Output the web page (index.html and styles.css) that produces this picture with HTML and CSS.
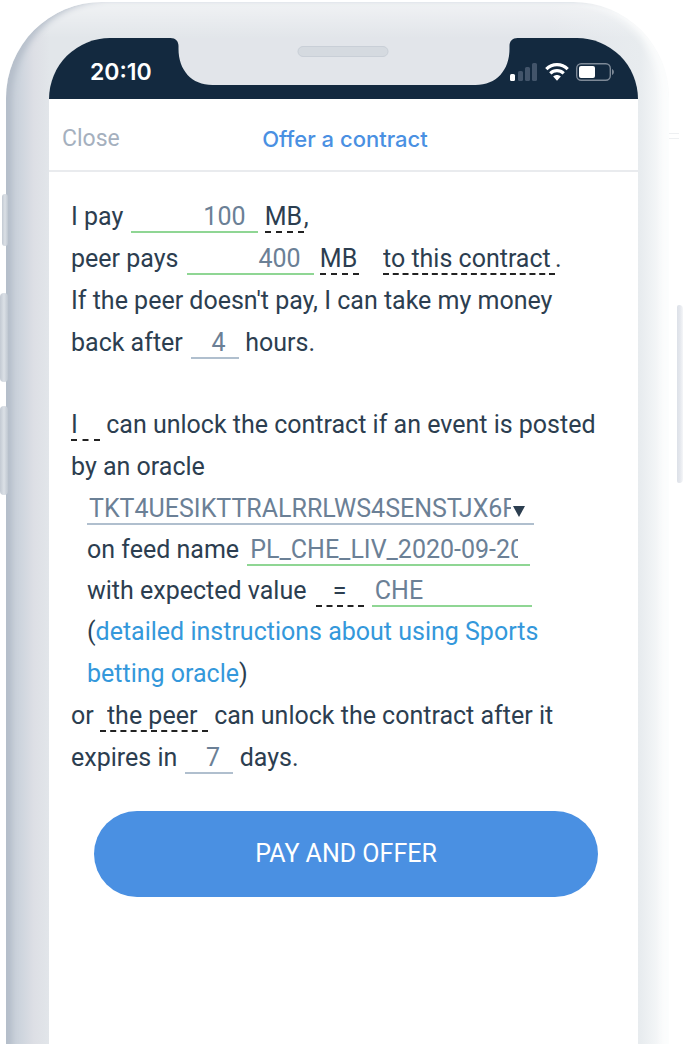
FILE: index.html
```html
<!DOCTYPE html>
<html lang="en">
<head>
<meta charset="utf-8">
<meta name="viewport" content="width=device-width, initial-scale=1">
<title>Offer a contract</title>
<link rel="stylesheet" href="styles.css">
</head>
<body>
<div class="stage">
  <span class="key key-mute"></span>
  <span class="key key-up"></span>
  <span class="key key-down"></span>
  <span class="key key-power"></span>
  <span class="antenna"></span>
  <div class="phone">
    <div class="screen">
      <div class="status">
        <svg class="notch" width="347" height="47" viewBox="0 0 347 47" aria-hidden="true">
          <path fill="#e2e5ea" d="M0 0C5 0 8 3 8 8V11C8 32 21 47 42 47H305C326 47 339 32 339 11V8C339 3 342 0 347 0Z"/>
          <rect x="127.500" y="8.500" width="90" height="10" rx="5" fill="#d5dae0" stroke="#c9cfd7"/>
        </svg>
        <span class="time">20:10</span>
        <span class="indicators">
          <svg width="28" height="18" viewBox="0 0 28 18" aria-hidden="true">
            <rect x="0" y="11" width="5" height="7" rx="1.500" fill="#fff"/>
            <g fill="#42546a"><rect x="8" y="8" width="5" height="10" rx="1.500"/><rect x="15" y="4" width="5" height="14" rx="1.500"/><rect x="22" y="0" width="5" height="18" rx="1.500"/></g>
          </svg>
          <svg width="24" height="18" viewBox="0 0 24 18" aria-hidden="true">
            <g fill="none" stroke="#fff" stroke-width="3.200"><path d="M1.300 6.200C7.300 .1 16.700 .1 22.700 6.200"/><path d="M5.300 10.400C9.100 6.600 14.900 6.600 18.700 10.400"/></g>
            <path fill="#fff" d="M8.200 13.600C10.300 11.600 13.700 11.600 15.800 13.600L12 17.700Z"/>
          </svg>
          <svg width="38" height="18" viewBox="0 0 38 18" aria-hidden="true">
            <rect x=".7" y=".7" width="33.600" height="16.600" rx="4.500" fill="none" stroke="#7d8997" stroke-width="1.400"/>
            <rect x="3" y="3" width="16" height="12" rx="2" fill="#fff"/>
            <path fill="#7d8997" d="M36 6C38.500 7 38.500 11 36 12Z"/>
          </svg>
        </span>
      </div>
      <header class="bar">
        <button class="close" type="button">Close</button>
        <h1 class="title">Offer a contract</h1>
      </header>
      <form class="offer">
        <p class="text">
          I pay <input class="field amount" aria-label="Amount I pay" value="100"> <select class="pick unit" aria-label="My unit"><option>MB</option></select>,<br>
          peer pays <input class="field amount" aria-label="Amount peer pays" value="400"> <select class="pick unit" aria-label="Peer unit"><option>MB</option></select> <select class="pick target" aria-label="Where the peer pays"><option>to this contract</option></select>.<br>
          If the peer doesn't pay, I can take my money<br>
          back after <input class="field short" aria-label="Hours" value="4"> hours.
        </p>
        <p class="text clause">
          <select class="pick who" aria-label="Who can unlock"><option>I</option></select> can unlock the contract if an event is posted<br>
          by an oracle
        </p>
        <div class="text nested tight">
          <div class="combo">
            <input class="combo-input" aria-label="Oracle address" value="TKT4UESIKTTRALRRLWS4SENSTJX6FTMZ">
            <button class="combo-toggle" type="button" aria-label="Choose oracle"><svg width="12" height="11" viewBox="0 0 12 11"><path fill="#2c3e50" d="M0 0H12L6 11Z"/></svg></button>
          </div>
          <div class="line"><label for="feed">on feed name</label> <input class="field feed" id="feed" value="PL_CHE_LIV_2020-09-20"></div>
          <div class="line"><label for="value">with expected value</label> <select class="pick sign" aria-label="Comparison"><option>=</option></select> <input class="field value" id="value" value="CHE"></div>
        </div>
        <p class="text nested">(<a class="link" href="#">detailed instructions about using Sports betting oracle</a>)</p>
        <p class="text">
          or <select class="pick peer" aria-label="Who unlocks after expiry"><option>the peer</option></select> can unlock the contract after it<br>
          expires in <input class="field short" aria-label="Days" value="7"> days.
        </p>
        <button class="submit" type="submit">PAY AND OFFER</button>
      </form>
    </div>
  </div>
</div>
</body>
</html>
```
FILE: styles.css
```css
* { box-sizing: border-box; }

body {
  margin: 0;
  background: #fff;
  color: #2c3e50;
  font-family: Roboto, "Liberation Sans", sans-serif;
}

.stage {
  position: relative;
  display: flex;
  min-height: 100vh;
  padding: 2px 17px 0 6px;
  overflow: hidden;
}

.phone {
  position: relative;
  display: flex;
  flex: 1;
  margin-bottom: -16px;
  padding: 36px 31px 0 43px;
  border-radius: 96px 96px 0 0;
  background:
    linear-gradient(to bottom, rgba(255, 255, 255, 0.5), rgba(255, 255, 255, 0) 36px),
    linear-gradient(to right, #c6ced8 0, #cdd4dd 14px, #dddfe5 28px, #e2e6ea 44px, #e2e5ea calc(100% - 120px), #e8ecef calc(100% - 28px), #fcfdfd 100%);
  box-shadow: inset 8px 0 6px -2px #b4bdc9, inset -8px 0 8px -2px #fcfdfd, inset 0 2px 3px #f0f2f4;
}

.screen {
  flex: 1;
  min-width: 0;
  border-radius: 61px 61px 0 0;
  background: #fff;
  overflow: hidden;
}

.status {
  position: relative;
  display: flex;
  align-items: center;
  justify-content: space-between;
  height: 61px;
  padding: 6px 24px 0 41px;
  background: #13293f;
  color: #fff;
}

.notch {
  position: absolute;
  top: 0;
  left: 50%;
  transform: translateX(-50%);
}

.time { font: 600 23px/28px Inter, sans-serif; }

.indicators { display: flex; gap: 7px; }
.indicators svg { display: block; }

.bar {
  display: grid;
  grid-template-columns: 1fr auto 1fr;
  align-items: center;
  height: 73px;
  padding: 8px 10px 0 13px;
  border-bottom: 2px solid #e9ebee;
}

.close {
  justify-self: start;
  padding: 0;
  border: 0;
  background: none;
  color: #a5b0be;
  font: 23px/28px Roboto, sans-serif;
}

.title {
  margin: 0;
  color: #4a90e2;
  font: 500 22px/28px Inter, sans-serif;
}

.offer { padding: 24px 17px 40px 22px; }

.text {
  margin: 0;
  font-size: 25px;
  line-height: 42px;
}

.clause { margin-top: 40px; }
.nested { padding-left: 16px; }
.tight { line-height: 41px; }

.field,
.pick,
.combo-input {
  height: 31px;
  margin: 0;
  padding: 0;
  border: 0;
  border-radius: 0;
  outline: 0;
  background: none;
  color: #6b8096;
  font: 25px/29px Roboto, sans-serif;
  vertical-align: baseline;
}

.field {
  margin-left: 2px;
  border-bottom: 2px solid #8fd694;
}

.amount {
  width: 127px;
  padding-right: 13px;
  text-align: right;
}

.short {
  width: 48px;
  padding-left: 7px;
  border-color: #b0bfce;
  text-align: center;
}

.feed {
  width: 283px;
  padding: 0 12px 0 3px;
}

.value {
  width: 160px;
  padding-left: 3px;
}

.pick {
  appearance: none;
  border-bottom: 2px dashed #222;
  color: #2c3e50;
}

.unit { width: 39px; }
.target { width: 172px; margin-left: 18px; }
.who { width: 29px; }
.sign { width: 48px; margin-left: 3px; padding-left: 17px; }
.peer { width: 108px; padding-left: 7px; }

.combo {
  display: flex;
  width: 447px;
  max-width: 100%;
  height: 37px;
  margin-bottom: 4px;
  padding-top: 6px;
  border-bottom: 2px solid #b0bfce;
}

.combo-input {
  flex: 1;
  min-width: 0;
  height: 29px;
  padding-left: 2px;
}

.combo-toggle {
  width: 23px;
  padding: 6px 0 0 2px;
  border: 0;
  background: none;
  text-align: left;
}

.combo-toggle svg { display: block; }

.link { color: #3498db; text-decoration: none; }

.submit {
  display: block;
  width: calc(100% - 46px);
  height: 86px;
  margin: 32px auto 0;
  border: 0;
  border-radius: 43px;
  background: #4a90e2;
  color: #fff;
  font: 25px/30px Roboto, sans-serif;
}

.key {
  position: absolute;
  z-index: 1;
  left: 0;
  width: 8px;
  border-radius: 4px;
  background: linear-gradient(to right, #c3cad3, #dbe0e6 50%, #bfc7d1);
}

.key-mute { top: 194px; left: 2px; width: 6px; height: 52px; }
.key-up { top: 293px; height: 89px; }
.key-down { top: 406px; height: 89px; }

.key-power {
  top: 305px;
  right: 3px;
  left: auto;
  width: 6px;
  height: 178px;
  border-radius: 2px 4px 4px 2px;
  background: linear-gradient(to right, #dde1e8, #e4e7ed 50%, #f5f6f8);
}

.antenna {
  position: absolute;
  top: 133px;
  right: 7px;
  width: 10px;
  height: 6px;
  border: solid #eef0f2;
  border-width: 1px 0;
}
```
